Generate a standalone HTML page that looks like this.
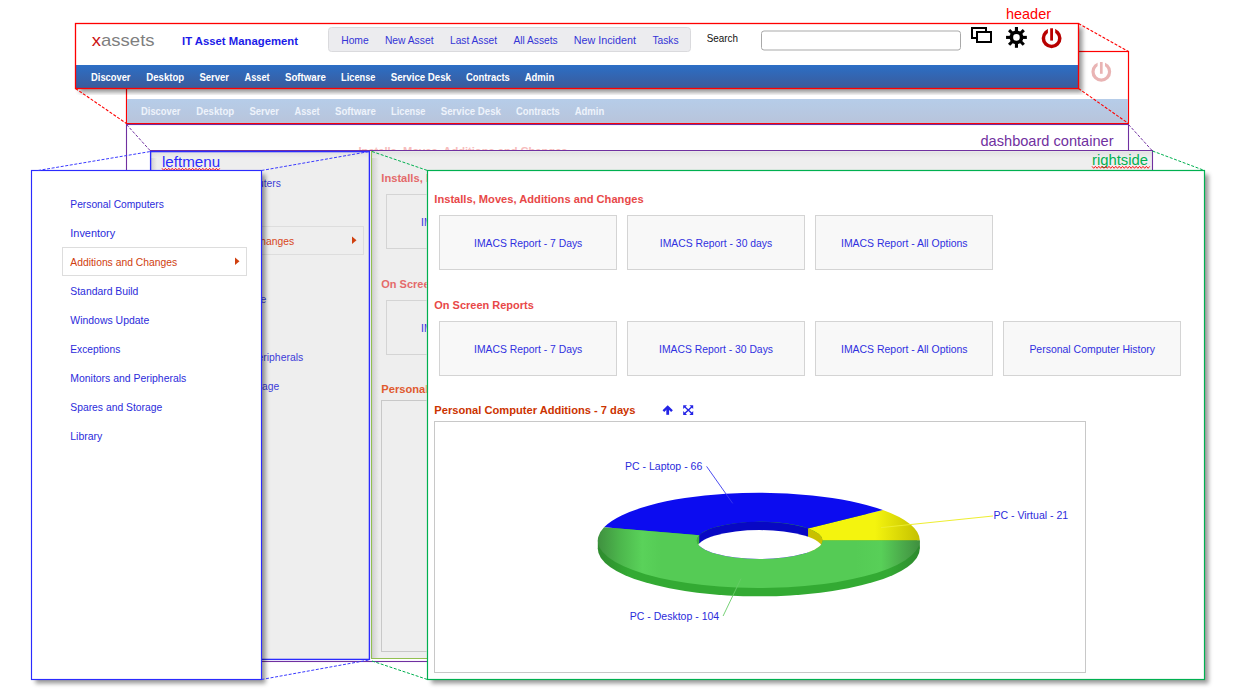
<!DOCTYPE html><html><head><meta charset="utf-8"><style>html,body{margin:0;padding:0;background:#fff;}svg{display:block;}text{font-family:"Liberation Sans", sans-serif;}</style></head><body>
<svg width="1235" height="698" viewBox="0 0 1235 698">
<defs>
<filter id="sh" x="-5%" y="-5%" width="115%" height="115%"><feDropShadow dx="4" dy="4" stdDeviation="2.0" flood-color="#000" flood-opacity="0.40"/></filter>
<filter id="shs" x="-5%" y="-20%" width="115%" height="150%"><feDropShadow dx="4" dy="4" stdDeviation="2.2" flood-color="#000" flood-opacity="0.5"/></filter>
<linearGradient id="bluebar" x1="0" y1="0" x2="0" y2="1"><stop offset="0" stop-color="#2c6fc6"/><stop offset="1" stop-color="#3b5b9b"/></linearGradient>
<linearGradient id="lbar" x1="0" y1="0" x2="0" y2="1"><stop offset="0" stop-color="#b6cde9"/><stop offset="1" stop-color="#b8c4db"/></linearGradient>
<linearGradient id="gtop" x1="597" y1="0" x2="920" y2="0" gradientUnits="userSpaceOnUse">
 <stop offset="0" stop-color="#3f8f3f"/><stop offset="0.07" stop-color="#4cb64c"/><stop offset="0.14" stop-color="#5ad25a"/><stop offset="0.2" stop-color="#55cb55"/><stop offset="0.8" stop-color="#55cb55"/><stop offset="0.88" stop-color="#58cf58"/><stop offset="0.95" stop-color="#4aa84a"/><stop offset="1" stop-color="#3f8f3f"/></linearGradient>
<linearGradient id="gside" x1="597" y1="0" x2="920" y2="0" gradientUnits="userSpaceOnUse">
 <stop offset="0" stop-color="#2e8a2e"/><stop offset="0.1" stop-color="#33aa33"/><stop offset="0.9" stop-color="#33aa33"/><stop offset="1" stop-color="#2e8a2e"/></linearGradient>
<linearGradient id="ytop" x1="820" y1="0" x2="920" y2="0" gradientUnits="userSpaceOnUse">
 <stop offset="0" stop-color="#f4f40e"/><stop offset="0.55" stop-color="#f4f40e"/><stop offset="1" stop-color="#c4c000"/></linearGradient>
<linearGradient id="insh" x1="0" y1="0" x2="1" y2="0"><stop offset="0" stop-color="#d0d0d0"/><stop offset="1" stop-color="#eeeeee"/></linearGradient>
<linearGradient id="insht" x1="0" y1="0" x2="0" y2="1"><stop offset="0" stop-color="#dcdcdc"/><stop offset="1" stop-color="#eeeeee"/></linearGradient>
<clipPath id="clipTop"><rect x="0" y="0" width="1235" height="150"/></clipPath>
<clipPath id="clipSL"><rect x="151" y="152" width="218" height="507"/></clipPath>
<clipPath id="clipSR"><rect x="372" y="151" width="54.5" height="507"/></clipPath>
</defs>
<g clip-path="url(#clipTop)">
<text x="358.5" y="154.5" font-size="11" font-weight="bold" fill="#f7bcbc" textLength="209.0" lengthAdjust="spacingAndGlyphs" >Installs, Moves, Additions and Changes</text>
</g>
<rect x="126.5" y="51.5" width="1002.0" height="72.0" fill="#fff" stroke="#ff0000" stroke-width="1.2" />
<rect x="127" y="99" width="1001" height="24" fill="url(#lbar)" stroke="none" stroke-width="1" />
<text x="141.1" y="115.2" font-size="11" font-weight="bold" fill="#eef3fb" textLength="39.4" lengthAdjust="spacingAndGlyphs" >Discover</text>
<text x="196.3" y="115.2" font-size="11" font-weight="bold" fill="#eef3fb" textLength="37.9" lengthAdjust="spacingAndGlyphs" >Desktop</text>
<text x="249.4" y="115.2" font-size="11" font-weight="bold" fill="#eef3fb" textLength="29.7" lengthAdjust="spacingAndGlyphs" >Server</text>
<text x="294.5" y="115.2" font-size="11" font-weight="bold" fill="#eef3fb" textLength="25.1" lengthAdjust="spacingAndGlyphs" >Asset</text>
<text x="335.0" y="115.2" font-size="11" font-weight="bold" fill="#eef3fb" textLength="40.9" lengthAdjust="spacingAndGlyphs" >Software</text>
<text x="391.1" y="115.2" font-size="11" font-weight="bold" fill="#eef3fb" textLength="34.4" lengthAdjust="spacingAndGlyphs" >License</text>
<text x="440.7" y="115.2" font-size="11" font-weight="bold" fill="#eef3fb" textLength="60.3" lengthAdjust="spacingAndGlyphs" >Service Desk</text>
<text x="516.0" y="115.2" font-size="11" font-weight="bold" fill="#eef3fb" textLength="43.8" lengthAdjust="spacingAndGlyphs" >Contracts</text>
<text x="574.7" y="115.2" font-size="11" font-weight="bold" fill="#eef3fb" textLength="29.6" lengthAdjust="spacingAndGlyphs" >Admin</text>
<circle cx="1101.3" cy="71.8" r="8.3" fill="none" stroke="#e9b4b4" stroke-width="3.2"/>
<rect x="1097.6" y="61" width="7.4" height="7" fill="#fff"/>
<line x1="1101.3" y1="62" x2="1101.3" y2="73.8" stroke="#e9b4b4" stroke-width="2.7"/>
<line x1="126.5" y1="123.5" x2="1128.5" y2="123.5" stroke="#ff0000" stroke-width="1.2" />
<g filter="url(#sh)">
<rect x="75.5" y="23.5" width="1003.0" height="65.0" fill="#fff" stroke="none" stroke-width="1" />
</g>
<rect x="76" y="65" width="1002" height="23" fill="url(#bluebar)" stroke="none" stroke-width="1" />
<text x="91.1" y="81.2" font-size="11" font-weight="bold" fill="#ffffff" textLength="39.4" lengthAdjust="spacingAndGlyphs" >Discover</text>
<text x="146.3" y="81.2" font-size="11" font-weight="bold" fill="#ffffff" textLength="37.9" lengthAdjust="spacingAndGlyphs" >Desktop</text>
<text x="199.4" y="81.2" font-size="11" font-weight="bold" fill="#ffffff" textLength="29.7" lengthAdjust="spacingAndGlyphs" >Server</text>
<text x="244.5" y="81.2" font-size="11" font-weight="bold" fill="#ffffff" textLength="25.1" lengthAdjust="spacingAndGlyphs" >Asset</text>
<text x="285.0" y="81.2" font-size="11" font-weight="bold" fill="#ffffff" textLength="40.9" lengthAdjust="spacingAndGlyphs" >Software</text>
<text x="341.1" y="81.2" font-size="11" font-weight="bold" fill="#ffffff" textLength="34.4" lengthAdjust="spacingAndGlyphs" >License</text>
<text x="390.7" y="81.2" font-size="11" font-weight="bold" fill="#ffffff" textLength="60.3" lengthAdjust="spacingAndGlyphs" >Service Desk</text>
<text x="466.0" y="81.2" font-size="11" font-weight="bold" fill="#ffffff" textLength="43.8" lengthAdjust="spacingAndGlyphs" >Contracts</text>
<text x="524.7" y="81.2" font-size="11" font-weight="bold" fill="#ffffff" textLength="29.6" lengthAdjust="spacingAndGlyphs" >Admin</text>
<rect x="75.5" y="23.5" width="1003.0" height="65.0" fill="none" stroke="#ff0000" stroke-width="1.3" />
<text x="91.8" y="46" font-size="17" fill="#7f7f7f" textLength="62.8" lengthAdjust="spacingAndGlyphs"><tspan fill="#cc1111">x</tspan>assets</text>
<text x="182.0" y="45.0" font-size="11.5" font-weight="bold" fill="#1b1be8" textLength="116.0" lengthAdjust="spacingAndGlyphs" >IT Asset Management</text>
<rect x="328.5" y="27.5" width="362.0" height="24.0" fill="#ececef" stroke="#dadadd" stroke-width="1" rx="3"/>
<text x="341.2" y="43.9" font-size="11" font-weight="normal" fill="#3434d6" textLength="27.5" lengthAdjust="spacingAndGlyphs" >Home</text>
<text x="384.9" y="43.9" font-size="11" font-weight="normal" fill="#3434d6" textLength="48.6" lengthAdjust="spacingAndGlyphs" >New Asset</text>
<text x="450.0" y="43.9" font-size="11" font-weight="normal" fill="#3434d6" textLength="47.0" lengthAdjust="spacingAndGlyphs" >Last Asset</text>
<text x="513.4" y="43.9" font-size="11" font-weight="normal" fill="#3434d6" textLength="44.2" lengthAdjust="spacingAndGlyphs" >All Assets</text>
<text x="573.8" y="43.9" font-size="11" font-weight="normal" fill="#3434d6" textLength="62.1" lengthAdjust="spacingAndGlyphs" >New Incident</text>
<text x="652.4" y="43.9" font-size="11" font-weight="normal" fill="#3434d6" textLength="26.2" lengthAdjust="spacingAndGlyphs" >Tasks</text>
<text x="706.8" y="42.2" font-size="11" font-weight="normal" fill="#111" textLength="31.2" lengthAdjust="spacingAndGlyphs" >Search</text>
<rect x="761.5" y="31" width="199.0" height="19" fill="#fff" stroke="#a9a9a9" stroke-width="1" rx="2.5"/>
<g fill="#fff" stroke="#000" stroke-width="2"><rect x="972" y="28" width="14" height="10"/><rect x="977" y="32" width="14" height="10"/></g>
<g stroke="#000" stroke-width="3.1"><line x1="1021.45" y1="37.40" x2="1026.85" y2="37.40"/><line x1="1019.99" y1="40.94" x2="1023.80" y2="44.75"/><line x1="1016.45" y1="42.40" x2="1016.45" y2="47.80"/><line x1="1012.91" y1="40.94" x2="1009.10" y2="44.75"/><line x1="1011.45" y1="37.40" x2="1006.05" y2="37.40"/><line x1="1012.91" y1="33.86" x2="1009.10" y2="30.05"/><line x1="1016.45" y1="32.40" x2="1016.45" y2="27.00"/><line x1="1019.99" y1="33.86" x2="1023.80" y2="30.05"/></g>
<circle cx="1016.45" cy="37.4" r="5.1" fill="none" stroke="#000" stroke-width="3.6"/>
<circle cx="1051.6" cy="38.3" r="8.2" fill="none" stroke="#b80000" stroke-width="3.5"/>
<rect x="1047.9" y="27" width="7.3" height="7" fill="#fff"/>
<line x1="1051.6" y1="28.3" x2="1051.6" y2="40.6" stroke="#b80000" stroke-width="2.8"/>
<text x="1006.0" y="19.1" font-size="15" font-weight="normal" fill="#ff0000" textLength="45.0" lengthAdjust="spacingAndGlyphs" >header</text>
<line x1="1078.5" y1="23.5" x2="1128.5" y2="51.5" stroke="#ff0000" stroke-width="1.1" stroke-dasharray="3 1.6" />
<line x1="1078.5" y1="88.5" x2="1128.5" y2="123.5" stroke="#ff0000" stroke-width="1.1" stroke-dasharray="3 1.6" />
<line x1="75.5" y1="88.5" x2="126.5" y2="123.5" stroke="#ff0000" stroke-width="1.1" stroke-dasharray="3 1.6" />
<rect x="126.5" y="124.5" width="1002.0" height="537.0" fill="none" stroke="#7030a0" stroke-width="1.1" />
<text x="980.5" y="145.7" font-size="15" font-weight="normal" fill="#7030a0" textLength="133.0" lengthAdjust="spacingAndGlyphs" >dashboard container</text>
<rect x="150" y="151" width="220" height="509" fill="#eeeeee" stroke="none" stroke-width="1" />
<rect x="151" y="152" width="6" height="507" fill="url(#insh)" stroke="none" stroke-width="1" />
<rect x="151" y="152" width="218" height="6" fill="url(#insht)" stroke="none" stroke-width="1" opacity="0.7"/>
<g clip-path="url(#clipSL)">
<rect x="179.5" y="226.5" width="184.0" height="28.0" fill="none" stroke="#dddddd" stroke-width="1" />
<text x="187.3" y="186.8" font-size="11" font-weight="normal" fill="#3c3cd8" textLength="93.6" lengthAdjust="spacingAndGlyphs" >Personal Computers</text>
<text x="187.3" y="215.8" font-size="11" font-weight="normal" fill="#3c3cd8" textLength="44.9" lengthAdjust="spacingAndGlyphs" >Inventory</text>
<text x="187.3" y="244.8" font-size="11" font-weight="normal" fill="#d8461a" textLength="106.8" lengthAdjust="spacingAndGlyphs" >Additions and Changes</text>
<text x="187.3" y="273.8" font-size="11" font-weight="normal" fill="#3c3cd8" textLength="68.1" lengthAdjust="spacingAndGlyphs" >Standard Build</text>
<text x="187.3" y="302.8" font-size="11" font-weight="normal" fill="#3c3cd8" textLength="79.0" lengthAdjust="spacingAndGlyphs" >Windows Update</text>
<text x="187.3" y="331.8" font-size="11" font-weight="normal" fill="#3c3cd8" textLength="50.0" lengthAdjust="spacingAndGlyphs" >Exceptions</text>
<text x="187.3" y="360.8" font-size="11" font-weight="normal" fill="#3c3cd8" textLength="116.0" lengthAdjust="spacingAndGlyphs" >Monitors and Peripherals</text>
<text x="187.3" y="389.8" font-size="11" font-weight="normal" fill="#3c3cd8" textLength="91.9" lengthAdjust="spacingAndGlyphs" >Spares and Storage</text>
<text x="187.3" y="418.8" font-size="11" font-weight="normal" fill="#3c3cd8" textLength="32.0" lengthAdjust="spacingAndGlyphs" >Library</text>
<path d="M352,236.5 L356.5,240.2 L352,244 Z" fill="#d0400f"/>
</g>
<rect x="150.6" y="151.6" width="218.79999999999998" height="507.79999999999995" fill="none" stroke="#2b2bff" stroke-width="1.35" />
<text x="162.0" y="166.8" font-size="15" font-weight="normal" fill="#2b2bff" textLength="58.2" lengthAdjust="spacingAndGlyphs" >leftmenu</text>
<polyline points="162.0,168.3 163.7,170.3 165.4,168.3 167.1,170.3 168.8,168.3 170.5,170.3 172.2,168.3 173.9,170.3 175.6,168.3 177.3,170.3 179.0,168.3 180.7,170.3 182.4,168.3 184.1,170.3 185.8,168.3 187.5,170.3 189.2,168.3 190.9,170.3 192.6,168.3 194.3,170.3 196.0,168.3 197.7,170.3 199.4,168.3 201.1,170.3 202.8,168.3 204.5,170.3 206.2,168.3 207.9,170.3 209.6,168.3 211.3,170.3 213.0,168.3 214.7,170.3 216.4,168.3 218.1,170.3 219.8,168.3" fill="none" stroke="#ff0000" stroke-width="0.9"/>
<rect x="371" y="151" width="781" height="507" fill="#eeeeee" stroke="none" stroke-width="1" />
<rect x="372" y="151" width="7" height="507" fill="url(#insh)" stroke="none" stroke-width="1" />
<rect x="372" y="151.5" width="780" height="6.5" fill="url(#insht)" stroke="none" stroke-width="1" opacity="0.7"/>
<g clip-path="url(#clipSR)">
<text x="381.3" y="182.0" font-size="11" font-weight="bold" fill="#e46a6a" textLength="209.3" lengthAdjust="spacingAndGlyphs" >Installs, Moves, Additions and Changes</text>
<rect x="386.5" y="194.5" width="177.0" height="54.0" fill="#eeeeee" stroke="#d4d4d4" stroke-width="1" />
<text x="421.0" y="225.8" font-size="11" font-weight="normal" fill="#3030e0" textLength="108.3" lengthAdjust="spacingAndGlyphs" >IMACS Report - 7 Days</text>
<rect x="574.5" y="194.5" width="177.0" height="54.0" fill="#eeeeee" stroke="#d4d4d4" stroke-width="1" />
<text x="606.8" y="225.8" font-size="11" font-weight="normal" fill="#3030e0" textLength="112.4" lengthAdjust="spacingAndGlyphs" >IMACS Report - 30 days</text>
<rect x="762.5" y="194.5" width="177.0" height="54.0" fill="#eeeeee" stroke="#d4d4d4" stroke-width="1" />
<text x="788.0" y="225.8" font-size="11" font-weight="normal" fill="#3030e0" textLength="126.6" lengthAdjust="spacingAndGlyphs" >IMACS Report - All Options</text>
<text x="381.3" y="288.3" font-size="11" font-weight="bold" fill="#e46a6a" textLength="99.5" lengthAdjust="spacingAndGlyphs" >On Screen Reports</text>
<rect x="386.5" y="300.5" width="177.0" height="54.0" fill="#eeeeee" stroke="#d4d4d4" stroke-width="1" />
<text x="421.0" y="332.0" font-size="11" font-weight="normal" fill="#3030e0" textLength="108.3" lengthAdjust="spacingAndGlyphs" >IMACS Report - 7 Days</text>
<rect x="574.5" y="300.5" width="177.0" height="54.0" fill="#eeeeee" stroke="#d4d4d4" stroke-width="1" />
<text x="606.0" y="332.0" font-size="11" font-weight="normal" fill="#3030e0" textLength="114.0" lengthAdjust="spacingAndGlyphs" >IMACS Report - 30 Days</text>
<rect x="762.5" y="300.5" width="177.0" height="54.0" fill="#eeeeee" stroke="#d4d4d4" stroke-width="1" />
<text x="788.0" y="332.0" font-size="11" font-weight="normal" fill="#3030e0" textLength="126.6" lengthAdjust="spacingAndGlyphs" >IMACS Report - All Options</text>
<rect x="950.5" y="300.5" width="177.0" height="54.0" fill="#eeeeee" stroke="#d4d4d4" stroke-width="1" />
<text x="976.4" y="332.0" font-size="11" font-weight="normal" fill="#3030e0" textLength="125.6" lengthAdjust="spacingAndGlyphs" >Personal Computer History</text>
<text x="381.3" y="393.2" font-size="11" font-weight="bold" fill="#e05a30" textLength="201.2" lengthAdjust="spacingAndGlyphs" >Personal Computer Additions - 7 days</text>
<rect x="381.5" y="400.5" width="651.0" height="251.0" fill="none" stroke="#c8c8c8" stroke-width="1" />
</g>
<line x1="371.5" y1="151" x2="371.5" y2="658.5" stroke="#92c050" stroke-width="1.1" />
<line x1="371" y1="658.5" x2="428" y2="658.5" stroke="#92c050" stroke-width="1.1" />
<line x1="150" y1="150.5" x2="1152.5" y2="150.5" stroke="#7030a0" stroke-width="1.1" />
<line x1="1152.5" y1="150" x2="1152.5" y2="171" stroke="#7030a0" stroke-width="1.1" />
<line x1="150" y1="661.5" x2="428" y2="661.5" stroke="#7030a0" stroke-width="1.1" />
<text x="1092.0" y="164.6" font-size="15" font-weight="normal" fill="#00b050" textLength="56.0" lengthAdjust="spacingAndGlyphs" >rightside</text>
<polyline points="1092.0,166.3 1093.7,168.3 1095.4,166.3 1097.1,168.3 1098.8,166.3 1100.5,168.3 1102.2,166.3 1103.9,168.3 1105.6,166.3 1107.3,168.3 1109.0,166.3 1110.7,168.3 1112.4,166.3 1114.1,168.3 1115.8,166.3 1117.5,168.3 1119.2,166.3 1120.9,168.3 1122.6,166.3 1124.3,168.3 1126.0,166.3 1127.7,168.3 1129.4,166.3 1131.1,168.3 1132.8,166.3 1134.5,168.3 1136.2,166.3 1137.9,168.3 1139.6,166.3 1141.3,168.3 1143.0,166.3 1144.7,168.3 1146.4,166.3 1148.1,168.3 1149.8,166.3" fill="none" stroke="#ff0000" stroke-width="0.9"/>
<line x1="126.5" y1="124.5" x2="150.5" y2="151" stroke="#7030a0" stroke-width="1.0" stroke-dasharray="3 1.6" />
<line x1="1128.5" y1="124.5" x2="1152.5" y2="151" stroke="#7030a0" stroke-width="1.0" stroke-dasharray="3 1.6" />
<g filter="url(#sh)">
<rect x="31.5" y="170.5" width="230.0" height="509.0" fill="#fff" stroke="none" stroke-width="1" />
</g>
<rect x="62.5" y="247.5" width="184.0" height="28.0" fill="#fff" stroke="#dddddd" stroke-width="1" />
<text x="70.3" y="207.8" font-size="11" font-weight="normal" fill="#2b2bdb" textLength="93.6" lengthAdjust="spacingAndGlyphs" >Personal Computers</text>
<text x="70.3" y="236.8" font-size="11" font-weight="normal" fill="#2b2bdb" textLength="44.9" lengthAdjust="spacingAndGlyphs" >Inventory</text>
<text x="70.3" y="265.8" font-size="11" font-weight="normal" fill="#d0400f" textLength="106.8" lengthAdjust="spacingAndGlyphs" >Additions and Changes</text>
<text x="70.3" y="294.8" font-size="11" font-weight="normal" fill="#2b2bdb" textLength="68.1" lengthAdjust="spacingAndGlyphs" >Standard Build</text>
<text x="70.3" y="323.8" font-size="11" font-weight="normal" fill="#2b2bdb" textLength="79.0" lengthAdjust="spacingAndGlyphs" >Windows Update</text>
<text x="70.3" y="352.8" font-size="11" font-weight="normal" fill="#2b2bdb" textLength="50.0" lengthAdjust="spacingAndGlyphs" >Exceptions</text>
<text x="70.3" y="381.8" font-size="11" font-weight="normal" fill="#2b2bdb" textLength="116.0" lengthAdjust="spacingAndGlyphs" >Monitors and Peripherals</text>
<text x="70.3" y="410.8" font-size="11" font-weight="normal" fill="#2b2bdb" textLength="91.9" lengthAdjust="spacingAndGlyphs" >Spares and Storage</text>
<text x="70.3" y="439.8" font-size="11" font-weight="normal" fill="#2b2bdb" textLength="32.0" lengthAdjust="spacingAndGlyphs" >Library</text>
<path d="M235,257.5 L239.5,261.2 L235,265 Z" fill="#d0400f"/>
<rect x="31.5" y="170.5" width="230.0" height="509.0" fill="none" stroke="#2b2bff" stroke-width="1.15" />
<line x1="38" y1="170.5" x2="150.5" y2="151.5" stroke="#3b3bff" stroke-width="1.0" stroke-dasharray="3 1.6" />
<line x1="261.5" y1="170.5" x2="369.5" y2="151.5" stroke="#3b3bff" stroke-width="1.0" stroke-dasharray="3 1.6" />
<line x1="261.5" y1="679.5" x2="369" y2="660" stroke="#3b3bff" stroke-width="1.0" stroke-dasharray="3 1.6" />
<g filter="url(#sh)">
<rect x="427.5" y="170.5" width="777.0" height="509.0" fill="#fff" stroke="none" stroke-width="1" />
</g>
<text x="434.3" y="203.0" font-size="11" font-weight="bold" fill="#e84848" textLength="209.3" lengthAdjust="spacingAndGlyphs" >Installs, Moves, Additions and Changes</text>
<rect x="439.5" y="215.5" width="177.0" height="54.0" fill="#f8f8f8" stroke="#d4d4d4" stroke-width="1" />
<text x="474.0" y="246.8" font-size="11" font-weight="normal" fill="#3030e0" textLength="108.3" lengthAdjust="spacingAndGlyphs" >IMACS Report - 7 Days</text>
<rect x="627.5" y="215.5" width="177.0" height="54.0" fill="#f8f8f8" stroke="#d4d4d4" stroke-width="1" />
<text x="659.8" y="246.8" font-size="11" font-weight="normal" fill="#3030e0" textLength="112.4" lengthAdjust="spacingAndGlyphs" >IMACS Report - 30 days</text>
<rect x="815.5" y="215.5" width="177.0" height="54.0" fill="#f8f8f8" stroke="#d4d4d4" stroke-width="1" />
<text x="841.0" y="246.8" font-size="11" font-weight="normal" fill="#3030e0" textLength="126.6" lengthAdjust="spacingAndGlyphs" >IMACS Report - All Options</text>
<text x="434.3" y="309.3" font-size="11" font-weight="bold" fill="#e84848" textLength="99.5" lengthAdjust="spacingAndGlyphs" >On Screen Reports</text>
<rect x="439.5" y="321.5" width="177.0" height="54.0" fill="#f8f8f8" stroke="#d4d4d4" stroke-width="1" />
<text x="474.0" y="353.0" font-size="11" font-weight="normal" fill="#3030e0" textLength="108.3" lengthAdjust="spacingAndGlyphs" >IMACS Report - 7 Days</text>
<rect x="627.5" y="321.5" width="177.0" height="54.0" fill="#f8f8f8" stroke="#d4d4d4" stroke-width="1" />
<text x="659.0" y="353.0" font-size="11" font-weight="normal" fill="#3030e0" textLength="114.0" lengthAdjust="spacingAndGlyphs" >IMACS Report - 30 Days</text>
<rect x="815.5" y="321.5" width="177.0" height="54.0" fill="#f8f8f8" stroke="#d4d4d4" stroke-width="1" />
<text x="841.0" y="353.0" font-size="11" font-weight="normal" fill="#3030e0" textLength="126.6" lengthAdjust="spacingAndGlyphs" >IMACS Report - All Options</text>
<rect x="1003.5" y="321.5" width="177.0" height="54.0" fill="#f8f8f8" stroke="#d4d4d4" stroke-width="1" />
<text x="1029.4" y="353.0" font-size="11" font-weight="normal" fill="#3030e0" textLength="125.6" lengthAdjust="spacingAndGlyphs" >Personal Computer History</text>
<text x="434.3" y="414.2" font-size="11" font-weight="bold" fill="#cc3300" textLength="201.2" lengthAdjust="spacingAndGlyphs" >Personal Computer Additions - 7 days</text>
<rect x="434.5" y="421.5" width="651.0" height="251.0" fill="none" stroke="#c8c8c8" stroke-width="1" />
<rect x="427.5" y="170.5" width="777.0" height="509.0" fill="none" stroke="#00b050" stroke-width="1.2" />
<line x1="372" y1="151.5" x2="427.5" y2="170.5" stroke="#00b050" stroke-width="1.0" stroke-dasharray="3 1.6" />
<line x1="1152.5" y1="151" x2="1204.5" y2="170.5" stroke="#00b050" stroke-width="1.0" stroke-dasharray="3 1.6" />
<line x1="372" y1="661" x2="427.5" y2="679.5" stroke="#00b050" stroke-width="1.0" stroke-dasharray="3 1.6" />
<polyline points="663.4,411.2 667.7,406.9 672,411.2" fill="none" stroke="#2424e6" stroke-width="2.4"/>
<line x1="667.7" y1="407" x2="667.7" y2="414.8" stroke="#2424e6" stroke-width="2.8"/>
<g stroke="#2424e6" stroke-width="1.4"><line x1="684.4" y1="406.4" x2="692.2" y2="413.8"/><line x1="692.2" y1="406.4" x2="684.4" y2="413.8"/></g>
<g fill="#2424e6"><path d="M683.2,405.2 L687,405.2 L683.2,409 Z"/><path d="M693.2,405.2 L689.4,405.2 L693.2,409 Z"/><path d="M683.2,414.9 L687,414.9 L683.2,411.1 Z"/><path d="M693.2,414.9 L689.4,414.9 L693.2,411.1 Z"/></g>
<ellipse cx="758.8" cy="548.6999999999999" rx="161.0" ry="47.6" fill="url(#gside)"/>
<rect x="597.8" y="540.4" width="322.0" height="8.3" fill="url(#gside)"/>
<path d="M919.80,540.40 A161.0,47.6 0 0 0 882.85,510.06 L808.08,528.54 A62.85,18.6 0 0 1 822.50,540.40 Z" fill="url(#ytop)"/>
<path d="M882.85,510.06 A161.0,47.6 0 0 0 604.04,527.28 L699.23,535.27 A62.85,18.6 0 0 1 808.08,528.54 Z" fill="#0c0cf0"/>
<path d="M604.04,527.28 A161.0,47.6 0 1 0 919.80,540.40 L822.50,540.40 A62.85,18.6 0 1 1 699.23,535.27 Z" fill="url(#gtop)"/>
<clipPath id="hole"><ellipse cx="759.65" cy="540.40" rx="62.85" ry="18.60"/></clipPath>
<g clip-path="url(#hole)">
<rect x="694.8" y="519.8" width="4.434702410276714" height="41.2" fill="#3fae3f"/>
<rect x="699.2347024102767" y="519.8" width="108.84205489818169" height="41.2" fill="#0808c4"/>
<rect x="808.0767573084584" y="519.8" width="16.423242691541645" height="41.2" fill="#c9c000"/>
<ellipse cx="759.65" cy="548.6999999999999" rx="62.85" ry="18.6" fill="#fff"/>
</g>
<line x1="706.6" y1="466.4" x2="732.7" y2="503.4" stroke="#3a3aee" stroke-width="0.9" />
<text x="625.0" y="469.7" font-size="11" font-weight="normal" fill="#2b2bdb" textLength="77.3" lengthAdjust="spacingAndGlyphs" >PC - Laptop - 66</text>
<line x1="881" y1="527.6" x2="993" y2="516" stroke="#eeee30" stroke-width="1.0" />
<text x="993.4" y="518.7" font-size="11" font-weight="normal" fill="#2b2bdb" textLength="74.8" lengthAdjust="spacingAndGlyphs" >PC - Virtual - 21</text>
<line x1="723.1" y1="616" x2="741" y2="578.6" stroke="#66cc66" stroke-width="0.9" />
<text x="629.8" y="619.7" font-size="11" font-weight="normal" fill="#2b2bdb" textLength="89.4" lengthAdjust="spacingAndGlyphs" >PC - Desktop - 104</text>
</svg></body></html>
